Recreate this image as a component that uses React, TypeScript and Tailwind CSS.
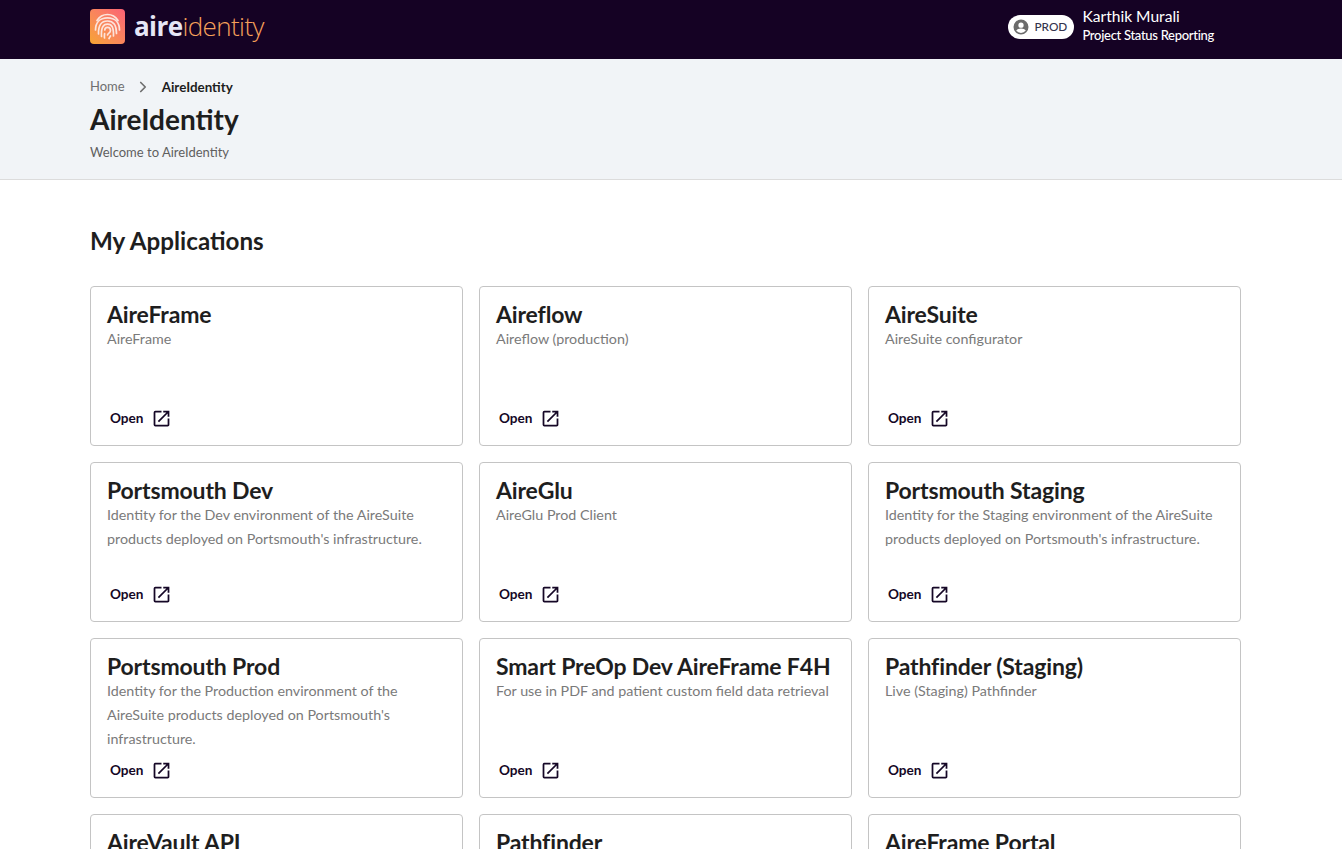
import { ChevronRight } from 'lucide-react'
import React from 'react'
import { MdOpenInNew } from 'react-icons/md'

const apps = [
    { name: 'AireFrame', desc: 'AireFrame' },
    { name: 'Aireflow', desc: 'Aireflow (production)' },
    { name: 'AireSuite', desc: 'AireSuite configurator' },
    { name: 'Portsmouth Dev', desc: "Identity for the Dev environment of the AireSuite products deployed on Portsmouth's infrastructure." },
    { name: 'AireGlu', desc: 'AireGlu Prod Client' },
    { name: 'Portsmouth Staging', desc: "Identity for the Staging environment of the AireSuite products deployed on Portsmouth's infrastructure." },
    { name: 'Portsmouth Prod', desc: "Identity for the Production environment of the AireSuite products deployed on Portsmouth's infrastructure." },
    { name: 'Smart PreOp Dev AireFrame F4H', desc: 'For use in PDF and patient custom field data retrieval' },
    { name: 'Pathfinder (Staging)', desc: 'Live (Staging) Pathfinder' },
    { name: 'AireVault API', desc: '' },
    { name: 'Pathfinder', desc: '' },
    { name: 'AireFrame Portal', desc: '' },
]

function AppCard({ name, desc }: { name: string; desc: string }) {
    return (
        <div className="h-[160px] rounded border border-[#c4c4c4] bg-white px-4 pt-[11px] relative">
            <h3 className="text-[23px] leading-[32px] font-bold text-[#1e1e1e] tracking-[-0.15px] whitespace-nowrap">{name}</h3>
            <p className="text-[14.300px] leading-[24px] text-[#7a7a7a] -mt-[3px]">{desc}</p>
            <a href="#" className="absolute left-[19px] top-[121px] flex items-center gap-[7px] text-[13.600px] font-bold text-[#150726]">
                Open
                <MdOpenInNew className="w-[21px] h-[21px]" />
            </a>
        </div>
    )
}

function App() {
    return (
        <div className="h-[849px] overflow-hidden bg-white font-['Lato',sans-serif]">
            <header className="h-[59px] bg-[#150224] pl-[90px] pr-[128px] flex items-start justify-between">
                <div className="flex items-center gap-[9px] mt-[9px]">
                    <div className="w-[35px] h-[35px] rounded-[4px] bg-gradient-to-tr from-[#f6a42f] to-[#fb6175] flex items-center justify-center">
                        <svg viewBox="0 0 35 35" className="w-[35px] h-[35px]" fill="none" stroke="#fde4dc" strokeWidth="1.700" strokeLinecap="round">
                            <path d="M7 11.500C9.500 7.500 13 5.500 17.500 5.500C22 5.500 25.500 7.500 28 11.500" />
                            <path d="M5.500 21C5.500 13.500 10 8.800 17.500 8.800C25 8.800 29.500 13.500 29.500 21" />
                            <path d="M8.500 25C8.200 16 11.500 12 17.500 12C23.500 12 26.500 16 26.500 24.500" />
                            <path d="M11.500 27.500C11 19 13 15.200 17.500 15.200C22 15.200 23.700 18.500 23.500 27" />
                            <path d="M14.800 21C14.800 19.300 16 18.300 17.500 18.300C19.500 18.300 20.500 19.500 20.500 21.500C20.500 24 17.800 24 17.500 26" />
                            <path d="M14.500 29C14.300 27.500 14.400 26 14.600 24.500" />
                            <path d="M19 29.500C19.500 28.500 20 27.800 20.500 27" />
                        </svg>
                    </div>
                    <div className="text-[26px] leading-none font-['Open_Sans',sans-serif] tracking-[-0.6px] -mt-[1px]">
                        <span className="font-bold text-[#e6e6f6]">aire</span>
                        <span className="font-light text-[#f6a05a]">identity</span>
                    </div>
                </div>
                <div className="flex items-start gap-[8px] mt-[7px]">
                    <div className="w-[66px] h-[24px] mt-[8px] rounded-full bg-white flex items-center pl-[4px] gap-[4px]">
                        <svg viewBox="0 0 24 24" className="w-[18px] h-[18px] text-[#6b6b6b]" fill="currentColor">
                            <path d="M12 2a10 10 0 1 0 0 20 10 10 0 0 0 0-20zm0 4a3.500 3.500 0 1 1 0 7 3.500 3.500 0 0 1 0-7zm0 14a8 8 0 0 1-6.400-3.200c.9-1.700 4-2.800 6.400-2.800s5.500 1.100 6.400 2.800A8 8 0 0 1 12 20z" />
                        </svg>
                        <span className="text-[11.800px] font-medium text-[#33334d]">PROD</span>
                    </div>
                    <div className="text-white">
                        <div className="text-[15.600px] leading-[19px]">Karthik Murali</div>
                        <div className="text-[13px] leading-[18px] tracking-[-0.3px] font-medium">Project Status Reporting</div>
                    </div>
                </div>
            </header>

            <section className="h-[121px] bg-[#f1f4f7] border-b border-[#dcdcdc] px-[90px] pt-[18px]">
                <nav className="flex items-center h-[20px]">
                    <span className="text-[13px] text-[#6f6f6f]">Home</span>
                    <ChevronRight className="w-[18px] h-[18px] text-[#6f6f6f] ml-[9px] mr-[10px]" strokeWidth={2.25} />
                    <span className="text-[13.400px] font-bold text-[#1e1e1e]">AireIdentity</span>
                </nav>
                <h1 className="text-[28px] leading-[38px] font-bold text-[#1e1e1e] mt-[3px]">AireIdentity</h1>
                <p className="text-[13px] leading-[20px] text-[#5f5f5f] mt-[4px]">Welcome to AireIdentity</p>
            </section>

            <main className="pl-[90px] pr-[101px]">
                <h2 className="text-[24.200px] leading-[32px] font-bold text-[#1e1e1e] mt-[45px] mb-[29px]">My Applications</h2>
                <div className="grid grid-cols-3 gap-4">
                    {apps.map(app => (
                        <AppCard key={app.name} name={app.name} desc={app.desc} />
                    ))}
                </div>
            </main>
        </div>
    )
}

export default App
